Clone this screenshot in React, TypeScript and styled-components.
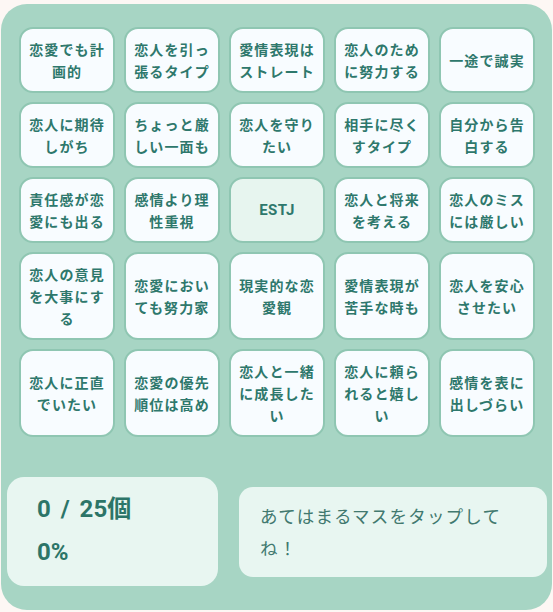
import React, { useState } from "react";
import styled, { createGlobalStyle } from "styled-components";

const GlobalStyle = createGlobalStyle`
  html, body {
    margin: 0;
    padding: 0;
    background: #fdf7f4;
  }
  body {
    font-family: "Noto Sans CJK JP", "Noto Sans", sans-serif;
  }
`;

const Page = styled.div`
  padding: 4px 1px 0 1px;
`;

const Panel = styled.div`
  background: #a7d5c4;
  border-radius: 26px;
  padding: 23px 17px 24px 18px;
  min-height: 560px;
  box-sizing: border-box;
`;

const Board = styled.div`
  display: grid;
  grid-template-columns: repeat(5, 1fr);
  gap: 9px;
`;

const Cell = styled.button<{ $free?: boolean; $on?: boolean }>`
  display: flex;
  align-items: center;
  justify-content: center;
  min-height: 66px;
  box-sizing: border-box;
  padding: 9px 6px;
  border: 2px solid #8fc6b2;
  border-radius: 14px;
  background: ${(p) => (p.$free || p.$on ? "#e7f5ef" : "#f8fcff")};
  color: #2e786c;
  font-family: ${(p) =>
    p.$free ? `Roboto, "Noto Sans CJK JP", sans-serif` : `"Noto Sans CJK JP", sans-serif`};
  font-size: ${(p) => (p.$free ? "15px" : "14px")};
  font-weight: 700;
  letter-spacing: ${(p) => (p.$free ? "0.5px" : "1.1px")};
  line-height: 22px;
  text-align: center;
  cursor: pointer;
  word-break: break-all;
`;

const Footer = styled.div`
  display: flex;
  align-items: center;
  gap: 21px;
  margin: 40px -12px 0 -12px;
`;

const Score = styled.div`
  width: 211px;
  flex: none;
  box-sizing: border-box;
  padding: 17px 30px 19px 30px;
  background: #e8f6f1;
  border-radius: 17px;
  color: #2c7568;
  display: flex;
  flex-direction: column;
  gap: 13px;
`;

const ScoreLine = styled.div`
  font-family: Roboto, "Noto Sans CJK JP", sans-serif;
  font-size: 24px;
  font-weight: 700;
  line-height: 30px;
  word-spacing: 4px;
`;

const Hint = styled.div`
  flex: 1;
  box-sizing: border-box;
  padding: 13px 36px 13px 21px;
  background: #e8f6f1;
  border-radius: 14px;
  color: #41796f;
  font-family: "Noto Sans CJK JP", sans-serif;
  font-size: 17.5px;
  letter-spacing: 1.2px;
  line-height: 32px;
`;

const items = [
  "恋愛でも計画的",
  "恋人を引っ張るタイプ",
  "愛情表現はストレート",
  "恋人のために努力する",
  "一途で誠実",
  "恋人に期待しがち",
  "ちょっと厳しい一面も",
  "恋人を守りたい",
  "相手に尽くすタイプ",
  "自分から告白する",
  "責任感が恋愛にも出る",
  "感情より理性重視",
  "ESTJ",
  "恋人と将来を考える",
  "恋人のミスには厳しい",
  "恋人の意見を大事にする",
  "恋愛においても努力家",
  "現実的な恋愛観",
  "愛情表現が苦手な時も",
  "恋人を安心させたい",
  "恋人に正直でいたい",
  "恋愛の優先順位は高め",
  "恋人と一緒に成長したい",
  "恋人に頼られると嬉しい",
  "感情を表に出しづらい",
];

export default function App() {
  const [picked, setPicked] = useState<number[]>([]);

  const toggle = (i: number) => {
    if (i === 12) return;
    setPicked((p) => (p.includes(i) ? p.filter((x) => x !== i) : [...p, i]));
  };

  const count = picked.length;
  const pct = Math.round((count / 25) * 100);

  return (
    <Page>
      <GlobalStyle />
      <Panel>
        <Board>
          {items.map((t, i) => (
            <Cell
              key={i}
              $free={i === 12}
              $on={picked.includes(i)}
              onClick={() => toggle(i)}
            >
              {t}
            </Cell>
          ))}
        </Board>
        <Footer>
          <Score>
            <ScoreLine>{count} / 25個</ScoreLine>
            <ScoreLine>{pct}%</ScoreLine>
          </Score>
          <Hint>あてはまるマスをタップしてね！</Hint>
        </Footer>
      </Panel>
    </Page>
  );
}
